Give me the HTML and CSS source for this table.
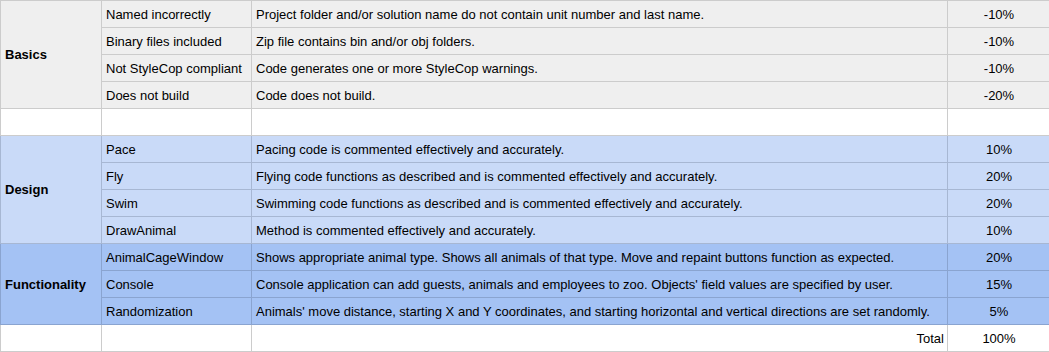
FILE: index.html
```html
<!DOCTYPE html>
<html>
<head>
<meta charset="utf-8">
<link rel="stylesheet" href="styles.css">
</head>
<body>
<table class="rubric">
  <colgroup>
    <col class="c-cat"><col class="c-item"><col class="c-desc"><col class="c-pct">
  </colgroup>
  <tbody class="basics">
    <tr><td class="cat" rowspan="4">Basics</td><td>Named incorrectly</td><td>Project folder and/or solution name do not contain unit number and last name.</td><td class="pct">-10%</td></tr>
    <tr><td>Binary files included</td><td>Zip file contains bin and/or obj folders.</td><td class="pct">-10%</td></tr>
    <tr><td>Not StyleCop compliant</td><td>Code generates one or more StyleCop warnings.</td><td class="pct">-10%</td></tr>
    <tr><td>Does not build</td><td>Code does not build.</td><td class="pct">-20%</td></tr>
  </tbody>
  <tbody class="blank">
    <tr><td></td><td></td><td></td><td></td></tr>
  </tbody>
  <tbody class="design">
    <tr><td class="cat" rowspan="4">Design</td><td>Pace</td><td>Pacing code is commented effectively and accurately.</td><td class="pct">10%</td></tr>
    <tr><td>Fly</td><td>Flying code functions as described and is commented effectively and accurately.</td><td class="pct">20%</td></tr>
    <tr><td>Swim</td><td>Swimming code functions as described and is commented effectively and accurately.</td><td class="pct">20%</td></tr>
    <tr><td>DrawAnimal</td><td>Method is commented effectively and accurately.</td><td class="pct">10%</td></tr>
  </tbody>
  <tbody class="func">
    <tr><td class="cat" rowspan="3">Functionality</td><td>AnimalCageWindow</td><td>Shows appropriate animal type. Shows all animals of that type. Move and repaint buttons function as expected.</td><td class="pct">20%</td></tr>
    <tr><td>Console</td><td>Console application can add guests, animals and employees to zoo. Objects' field values are specified by user.</td><td class="pct">15%</td></tr>
    <tr><td>Randomization</td><td>Animals' move distance, starting X and Y coordinates, and starting horizontal and vertical directions are set randomly.</td><td class="pct">5%</td></tr>
  </tbody>
  <tbody class="blank">
    <tr><td></td><td></td><td class="total">Total</td><td class="pct">100%</td></tr>
  </tbody>
</table>
</body>
</html>
```

FILE: styles.css
```css
html, body {
  margin: 0;
  padding: 0;
  background: #ffffff;
}

.rubric {
  border-collapse: collapse;
  table-layout: fixed;
  width: 1049px;
  font-family: "Liberation Sans", Arial, sans-serif;
  font-size: 13px;
  color: #000000;
}

.c-cat { width: 101px; }
.c-item { width: 150px; }
.c-desc { width: 696px; }
.c-pct { width: 102px; }

.rubric td {
  height: 26px;
  padding: 0 3px 0 4px;
  border: 1px solid #cccccc;
  white-space: nowrap;
  overflow: hidden;
  vertical-align: middle;
}

.rubric td.cat {
  font-weight: bold;
}

.rubric td.pct {
  text-align: center;
}

.rubric td.total {
  text-align: right;
}

.basics td {
  background: #efefef;
}

.blank td {
  background: #ffffff;
}

.design td {
  background: #c9daf8;
  border-color: #a7b7d3;
}

.func td {
  background: #a4c2f4;
  border-color: #8aa4d0;
}
```
